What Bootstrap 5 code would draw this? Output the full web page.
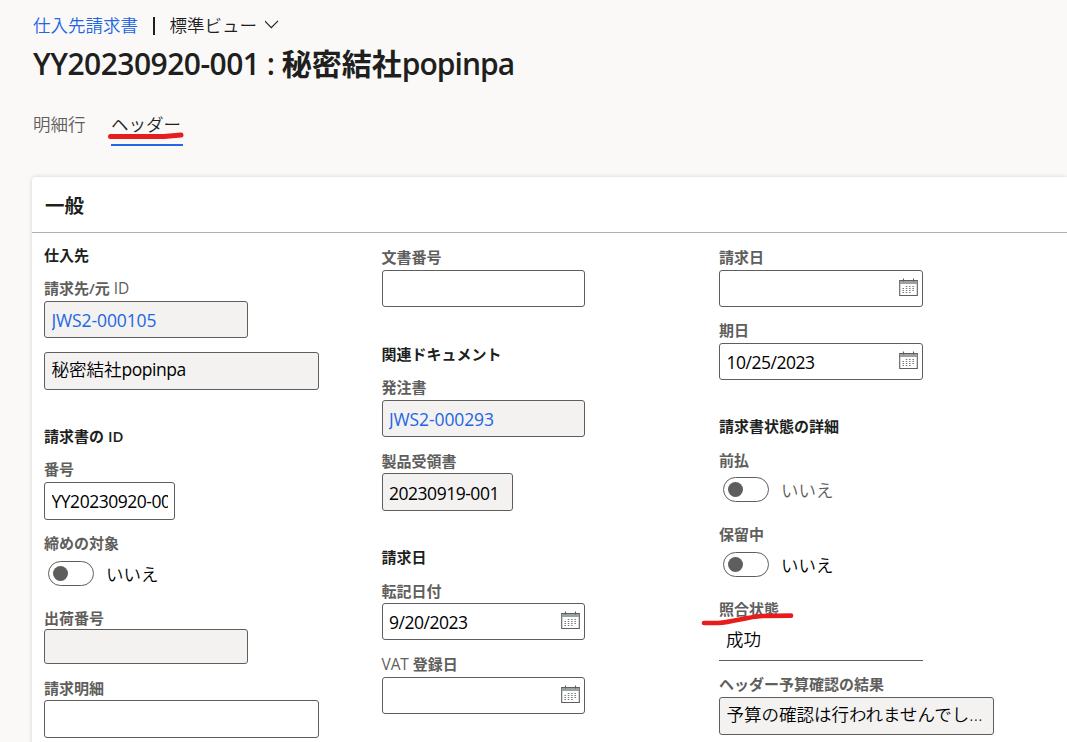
<!DOCTYPE html>
<html lang="ja">
<head>
<meta charset="utf-8">
<meta name="viewport" content="width=device-width, initial-scale=1">
<title>仕入先請求書</title>
<link href="https://cdn.jsdelivr.net/npm/bootstrap@5.3.0/dist/css/bootstrap.min.css" rel="stylesheet">
<style>
body{background:#faf9f8;color:#201f1e;font-family:"Open Sans","Noto Sans CJK JP",sans-serif;font-size:17.5px;line-height:24px;height:742px;overflow:hidden;font-weight:350}
.page{padding:12px 0 0 32px;height:742px;overflow:hidden}
a,.lnk{color:#2266e3;text-decoration:none}
.crumb{height:24px;padding:1px 0 0 1px}
.sep{width:1.5px;height:18px;background:#201f1e;margin:3px 15px 0 15px}
.ttl{font-size:30px;line-height:40px;height:40px;font-weight:700;margin:8px 0 0 1px;white-space:nowrap}
.ttl .en{font-weight:600;letter-spacing:-.53px}
.ttl .en2{letter-spacing:-.95px}
.tabs{margin:27px 0 0 1px;gap:26px}
.tabs span{height:35px;line-height:27px}
.tabs .off{color:#605e5c}
.tabs .on{border-bottom:2px solid #2266e3;width:72px;position:relative;left:-1px;padding-left:.5px}
.sheet{background:#fff;margin:31px 0 0 0;height:600px;border-radius:4px 0 0 0;box-shadow:0 0 4px rgba(0,0,0,.16)}
.sheet-head{height:56px;border-bottom:1px solid #b3b0ad;padding-left:13px;font-size:19.5px;font-weight:700;line-height:57px}
.cols{padding-left:12px}
.colm{width:337.5px;flex:none}
.colm:last-child{width:323px}
.c1{padding-top:12px}.c2{padding-top:14px}
.gt,.lb{font-size:15px;line-height:20px;height:20px;font-weight:600;white-space:nowrap}
.lb{color:#605e5c}
.lb .en{font-weight:450;font-size:15.5px;letter-spacing:-.1px}
.en{letter-spacing:-.1px}
.bx{border:1px solid #605e5c;border-radius:3px;height:37px;width:204px;background:#fff;color:#000;padding:0 6px 0 6.5px;margin-top:3px;overflow:hidden;white-space:nowrap;display:flex;align-items:center;justify-content:space-between}
.mid .bx:not(.narrow){width:203px}
.ro{background:#f3f2f1}
.tall{height:38px!important}.low{height:35px!important}
.wide{width:275px}.narrow{width:131px}
.val{font-weight:400;letter-spacing:-.48px;overflow:hidden;padding-top:1px}
.tall>.val{padding-top:0}
.mid .tall>.val{padding-top:1px}
.val.lnk{letter-spacing:-.12px}
.jp{padding-bottom:5px}
.jp .val{padding:0}
.dots{letter-spacing:.4px}
.plain{height:42px;width:204px;border-bottom:1px solid #605e5c;padding-left:7px;color:#000;line-height:40px}
.sw{margin-left:4px;height:26px;color:#000;gap:12px}
.sw i{display:block;width:46px;height:25px;border:1.3px solid #605e5c;border-radius:13px;padding:4px 4px;margin-top:-1px}
.sw i::before{content:"";display:block;width:15px;height:15px;border-radius:50%;background:#605e5c}
.sw .dim{color:#605e5c}
.g1{margin-top:1px}.g2{margin-top:2px}.g7{margin-top:7px}.g8{margin-top:8px}.g13{margin-top:13px}.g14{margin-top:14px}.g21{margin-top:21px}.g36{margin-top:36px}.g37{margin-top:37px}
.cal{width:19px;height:19px;flex:none;margin:-2px -2px 0 0}
.pen{position:absolute;overflow:visible;pointer-events:none}
.p1{left:-4px;top:6px}.p2{left:-19.5px;top:1px}
</style>
</head>
<body>
<svg class="d-none"><defs><symbol id="cal" viewBox="0 0 19 19"><path d="M.7 2.5h17.6v15H.7z" fill="none" stroke="#605e5c" stroke-width="1.1"/><path d="M1 3h17v3H1z" fill="#9aa39f"/><path d="M.7 2.5h17.6M4.5.5v3M14.5.5v3" stroke="#605e5c" stroke-width="1.1"/><path d="M6.8 8.5h9M3.5 10.5h12.3M3.5 12.5h12.3M3.5 14.5h9" stroke="#777" stroke-width="1" stroke-dasharray="1.5 1.8"/></symbol></defs></svg>
<div class="page">
  <div class="crumb d-flex align-items-center"><a href="#">仕入先請求書</a><div class="sep"></div><span>標準ビュー</span>
    <svg width="15" height="9" viewBox="0 0 15 9" class="ms-2"><path d="M-.3 .8l6.6 6.8L13 .8" fill="none" stroke="#201f1e" stroke-width="1.2"/></svg></div>
  <h1 class="ttl"><span class="en">YY20230920-001 : </span>秘密結社<span class="en en2">popinpa</span></h1>
  <nav class="tabs d-flex"><span class="off">明細行</span><span class="on">ヘッダー<svg class="pen p1" width="78" height="40"><path d="M3.5 19.5H57L74 18" fill="none" stroke="#e81c1c" stroke-width="5" stroke-linecap="round" stroke-linejoin="round"/></svg></span></nav>
  <section class="sheet">
    <div class="sheet-head">一般</div>
    <div class="cols d-flex">
      <div class="colm c1">
        <div class="gt">仕入先</div>
        <div class="lb g13">請求先/元 <span class="en">ID</span></div>
        <div class="bx ro"><span class="val lnk">JWS2-000105</span></div>
        <div class="bx ro wide tall g14"><span class="jp">秘密結社<span class="val">popinpa</span></span></div>
        <div class="gt g36">請求書の <span class="en">ID</span></div>
        <div class="lb g13">番号</div>
        <div class="bx narrow tall"><span class="val">YY20230920-001</span></div>
        <div class="lb g13">締めの対象</div>
        <div class="sw d-flex align-items-center g8"><i></i><span>いいえ</span></div>
        <div class="lb g21">出荷番号</div>
        <div class="bx ro low g1"></div>
        <div class="lb g14">請求明細</div>
        <div class="bx wide tall g2"></div>
      </div>
      <div class="colm c2 mid">
        <div class="lb">文書番号</div>
        <div class="bx"></div>
        <div class="gt g37">関連ドキュメント</div>
        <div class="lb g13">発注書</div>
        <div class="bx ro"><span class="val lnk">JWS2-000293</span></div>
        <div class="lb g14">製品受領書</div>
        <div class="bx ro narrow tall g2"><span class="val">20230919-001</span></div>
        <div class="gt g36">請求日</div>
        <div class="lb g14">転記日付</div>
        <div class="bx g2"><span class="val">9/20/2023</span><svg class="cal"><use href="#cal"/></svg></div>
        <div class="lb g14"><span class="en">VAT</span> 登録日</div>
        <div class="bx"><span></span><svg class="cal"><use href="#cal"/></svg></div>
      </div>
      <div class="colm c2">
        <div class="lb">請求日</div>
        <div class="bx"><span></span><svg class="cal"><use href="#cal"/></svg></div>
        <div class="lb g13">期日</div>
        <div class="bx"><span class="val">10/25/2023</span><svg class="cal"><use href="#cal"/></svg></div>
        <div class="gt g36">請求書状態の詳細</div>
        <div class="lb g14">前払</div>
        <div class="sw d-flex align-items-center g7"><i></i><span class="dim">いいえ</span></div>
        <div class="lb g21">保留中</div>
        <div class="sw d-flex align-items-center g8"><i></i><span>いいえ</span></div>
        <div class="lb g21 position-relative">照合状態<svg class="pen p2" width="96" height="30"><path d="M4 23H18C34 22 46 17 62 16L91 15.6" fill="none" stroke="#e81c1c" stroke-width="4.6" stroke-linecap="round" stroke-linejoin="round"/></svg></div>
        <div class="plain">成功</div>
        <div class="lb g13">ヘッダー予算確認の結果</div>
        <div class="bx ro wide tall"><span class="jp">予算の確認は行われませんでし<span class="dots">...</span></span></div>
      </div>
    </div>
  </section>
</div>
<script src="https://cdn.jsdelivr.net/npm/bootstrap@5.3.0/dist/js/bootstrap.bundle.min.js"></script>
</body>
</html>
